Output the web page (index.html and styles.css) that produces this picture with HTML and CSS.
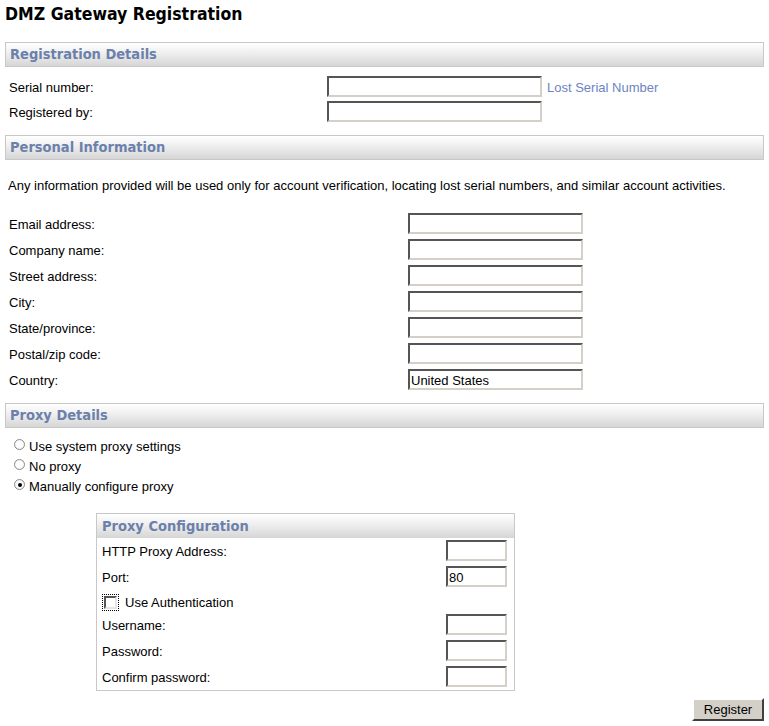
FILE: index.html
```html
<!DOCTYPE html>
<html>
<head>
<meta charset="utf-8">
<title>DMZ Gateway Registration</title>
<link rel="stylesheet" href="styles.css">
</head>
<body>
<h1 class="title">DMZ Gateway Registration</h1>

<div class="section-head">Registration Details</div>
<div class="rows reg">
  <div class="row"><label class="lbl">Serial number:</label><span class="field wide"></span><a class="link" href="#">Lost Serial Number</a></div>
  <div class="row"><label class="lbl">Registered by:</label><span class="field wide"></span></div>
</div>

<div class="section-head">Personal Information</div>
<p class="note">Any information provided will be used only for account verification, locating lost serial numbers, and similar account activities.</p>
<div class="rows personal">
  <div class="row"><label class="lbl">Email address:</label><span class="field mid"></span></div>
  <div class="row"><label class="lbl">Company name:</label><span class="field mid"></span></div>
  <div class="row"><label class="lbl">Street address:</label><span class="field mid"></span></div>
  <div class="row"><label class="lbl">City:</label><span class="field mid"></span></div>
  <div class="row"><label class="lbl">State/province:</label><span class="field mid"></span></div>
  <div class="row"><label class="lbl">Postal/zip code:</label><span class="field mid"></span></div>
  <div class="row"><label class="lbl">Country:</label><span class="field mid">United States</span></div>
</div>

<div class="section-head">Proxy Details</div>
<div class="radios">
  <div class="radio-row"><span class="radio"></span>Use system proxy settings</div>
  <div class="radio-row"><span class="radio"></span>No proxy</div>
  <div class="radio-row"><span class="radio checked"></span>Manually configure proxy</div>
</div>

<div class="proxy-box">
  <div class="box-head">Proxy Configuration</div>
  <div class="box-body">
    <div class="prow"><span>HTTP Proxy Address:</span><span class="field small"></span></div>
    <div class="prow"><span>Port:</span><span class="field small">80</span></div>
    <div class="prow check-row"><span class="focus"><span class="checkbox"></span></span><span>Use Authentication</span></div>
    <div class="prow"><span>Username:</span><span class="field small"></span></div>
    <div class="prow"><span>Password:</span><span class="field small"></span></div>
    <div class="prow"><span>Confirm password:</span><span class="field small"></span></div>
  </div>
</div>

<div class="actions"><button class="btn">Register</button></div>
</body>
</html>
```

FILE: styles.css
```css
html, body {
  margin: 0;
  padding: 0;
  background: #ffffff;
}
body {
  padding: 0 5px;
  font-family: "Liberation Sans", Arial, sans-serif;
  font-size: 13px;
  color: #000;
}
.title {
  margin: 0;
  padding-top: 2px;
  font-family: "DejaVu Sans Condensed", "DejaVu Sans", sans-serif;
  font-weight: bold;
  font-size: 17.5px;
  line-height: 24px;
  height: 42px;
  box-sizing: border-box;
}
.section-head {
  height: 25px;
  box-sizing: border-box;
  border: 1px solid #c8c8c8;
  background: linear-gradient(to bottom, #ffffff 0%, #f0f0f0 40%, #d6d6d6 100%);
  color: #6b80ab;
  font-family: "DejaVu Sans Condensed", "DejaVu Sans", sans-serif;
  font-weight: bold;
  font-size: 14.5px;
  line-height: 23px;
  padding-left: 4px;
}
.rows {
  display: flex;
  flex-direction: column;
}
.row {
  display: flex;
  align-items: center;
  height: 21px;
}
.row .lbl {
  padding-top: 2px;
}
.reg {
  padding-top: 9px;
  gap: 4px;
  margin-bottom: 13px;
}
.reg .lbl {
  width: 318px;
  padding-left: 4px;
}
.personal {
  gap: 5px;
  margin-bottom: 13px;
}
.personal .lbl {
  width: 399px;
  padding-left: 4px;
}
.field {
  display: block;
  box-sizing: border-box;
  height: 21px;
  border: 2px solid;
  border-color: #555555 #d4d0c8 #d4d0c8 #555555;
  background: #fff;
  font-size: 13px;
  line-height: 19px;
  padding-left: 1px;
}
.wide { width: 215px; }
.mid { width: 175px; }
.small { width: 61px; }
.link {
  color: #6b84c4;
  text-decoration: none;
  margin-left: 5px;
  padding-top: 2px;
}
.note {
  margin: 18px 0 19px 3px;
  line-height: 16px;
}
.radios {
  padding-top: 8px;
  padding-left: 9px;
  margin-bottom: 17px;
}
.radio-row {
  display: flex;
  align-items: center;
  height: 20px;
}
.radio {
  width: 11px;
  height: 11px;
  box-sizing: border-box;
  border-radius: 50%;
  border: 1px solid #8d8d8d;
  background: radial-gradient(circle, #ffffff 40%, #e6e6e6 100%);
  margin-right: 4px;
  margin-top: -3px;
  position: relative;
}
.radio.checked::after {
  content: "";
  position: absolute;
  left: 2.5px;
  top: 2.5px;
  width: 4px;
  height: 4px;
  border-radius: 50%;
  background: #000;
}
.proxy-box {
  margin-left: 91px;
  width: 419px;
  box-sizing: border-box;
  border: 1px solid #c8c8c8;
}
.box-head {
  height: 24px;
  background: linear-gradient(to bottom, #ffffff 0%, #f0f0f0 40%, #d6d6d6 100%);
  color: #6b80ab;
  font-family: "DejaVu Sans Condensed", "DejaVu Sans", sans-serif;
  font-weight: bold;
  font-size: 14.5px;
  line-height: 25px;
  padding-left: 5px;
}
.box-body {
  padding: 2px 7px 3px 5px;
  display: flex;
  flex-direction: column;
}
.prow {
  display: flex;
  align-items: center;
  justify-content: space-between;
  height: 21px;
  margin-bottom: 5px;
}
.prow > span:first-child {
  padding-top: 2px;
}
.prow:last-child { margin-bottom: 0; }
.check-row {
  justify-content: flex-start;
  height: 21px;
  margin-bottom: 1px;
}
.check-row > span:first-child {
  padding-top: 1px;
}
.focus {
  display: inline-flex;
  border: 1px dotted #000;
  padding: 1px;
  margin-right: 6px;
}
.checkbox {
  display: block;
  width: 13px;
  height: 13px;
  box-sizing: border-box;
  border: 2px solid;
  border-color: #555555 #e6e6e6 #e6e6e6 #555555;
  background: #fff;
}
.actions {
  display: flex;
  justify-content: flex-end;
  padding-top: 7px;
}
.btn {
  width: 72px;
  height: 23px;
  box-sizing: border-box;
  background: #d4d0c8;
  border: 2px solid;
  border-color: #ffffff #404040 #404040 #ffffff;
  font-family: "Liberation Sans", Arial, sans-serif;
  font-size: 13px;
  color: #000;
  padding: 0;
}
```
